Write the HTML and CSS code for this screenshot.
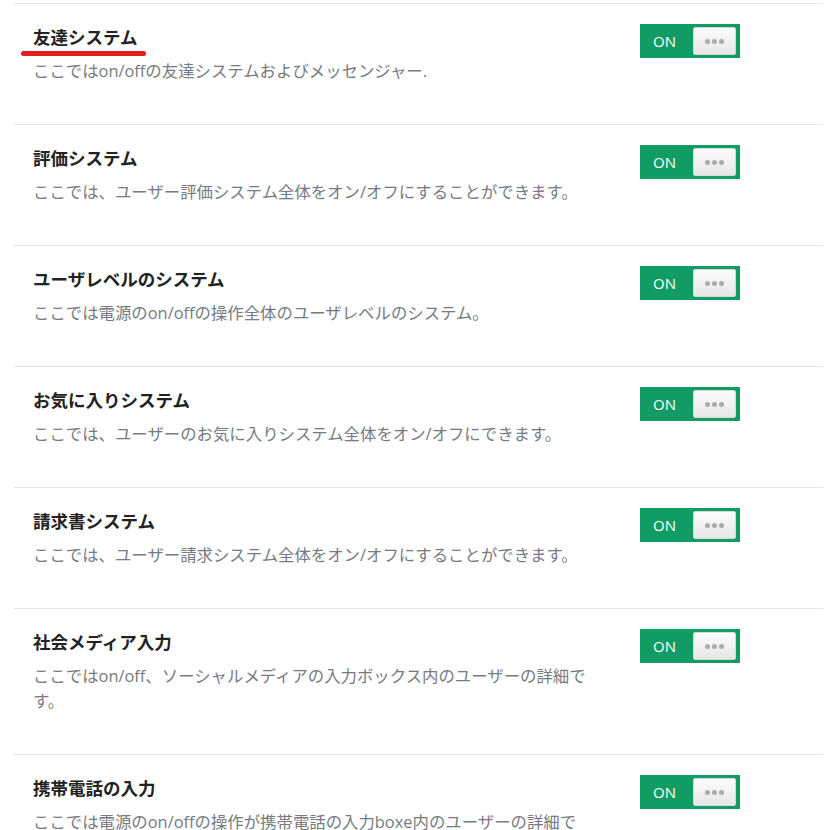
FILE: index.html
```html
<!DOCTYPE html>
<html lang="ja">
<head>
    <meta charset="UTF-8">
    <title>システム設定</title>
    <link rel="stylesheet" href="styles.css">
</head>
<body>
    <div class="settings">
        <div class="setting">
            <div class="info">
                <h3 class="title marked">友達システム</h3>
                <p class="desc">ここではon/offの友達システムおよびメッセンジャー.</p>
            </div>
            <div class="toggle"><span class="on">ON</span><span class="knob"><i></i><i></i><i></i></span></div>
        </div>
        <div class="setting">
            <div class="info">
                <h3 class="title">評価システム</h3>
                <p class="desc">ここでは、ユーザー評価システム全体をオン/オフにすることができます。</p>
            </div>
            <div class="toggle"><span class="on">ON</span><span class="knob"><i></i><i></i><i></i></span></div>
        </div>
        <div class="setting">
            <div class="info">
                <h3 class="title">ユーザレベルのシステム</h3>
                <p class="desc">ここでは電源のon/offの操作全体のユーザレベルのシステム。</p>
            </div>
            <div class="toggle"><span class="on">ON</span><span class="knob"><i></i><i></i><i></i></span></div>
        </div>
        <div class="setting">
            <div class="info">
                <h3 class="title">お気に入りシステム</h3>
                <p class="desc">ここでは、ユーザーのお気に入りシステム全体をオン/オフにできます。</p>
            </div>
            <div class="toggle"><span class="on">ON</span><span class="knob"><i></i><i></i><i></i></span></div>
        </div>
        <div class="setting">
            <div class="info">
                <h3 class="title">請求書システム</h3>
                <p class="desc">ここでは、ユーザー請求システム全体をオン/オフにすることができます。</p>
            </div>
            <div class="toggle"><span class="on">ON</span><span class="knob"><i></i><i></i><i></i></span></div>
        </div>
        <div class="setting">
            <div class="info">
                <h3 class="title">社会メディア入力</h3>
                <p class="desc">ここではon/off、ソーシャルメディアの入力ボックス内のユーザーの詳細です。</p>
            </div>
            <div class="toggle"><span class="on">ON</span><span class="knob"><i></i><i></i><i></i></span></div>
        </div>
        <div class="setting">
            <div class="info">
                <h3 class="title">携帯電話の入力</h3>
                <p class="desc">ここでは電源のon/offの操作が携帯電話の入力boxe内のユーザーの詳細です。</p>
            </div>
            <div class="toggle"><span class="on">ON</span><span class="knob"><i></i><i></i><i></i></span></div>
        </div>
    </div>
</body>
</html>
```

FILE: styles.css
```css
body {
    margin: 0;
    font-family: 'Open Sans', 'Noto Sans CJK JP', sans-serif;
    background-color: #fff;
    overflow: hidden;
}

.settings {
    margin: 3px 15px 0 14px;
}

.setting {
    display: flex;
    align-items: flex-start;
    border-top: 1px solid #e2e2e9;
    padding: 20px 0 41px 19px;
}

.info {
    width: 566px;
}

.title {
    margin: 0;
    padding-top: 1px;
    font-size: 17.5px;
    line-height: 24px;
    font-weight: bold;
    color: #222;
    position: relative;
}

.marked::after {
    content: '';
    position: absolute;
    left: -12px;
    top: 27px;
    width: 125px;
    height: 5px;
    border-radius: 3px;
    background-color: #e11f1f;
}

.desc {
    margin: 9px 0 0;
    font-size: 16.4px;
    line-height: 25px;
    color: #767b82;
}

.toggle {
    display: flex;
    align-items: center;
    width: 100px;
    height: 34px;
    margin-left: 41px;
    background-color: #109c64;
    box-sizing: border-box;
    padding: 0 4px 0 13px;
}

.on {
    color: #fff;
    font-family: 'Open Sans', sans-serif;
    font-size: 15px;
    flex: 1;
}

.knob {
    display: flex;
    align-items: center;
    justify-content: center;
    gap: 2px;
    width: 43px;
    height: 28px;
    box-sizing: border-box;
    border: 1px solid #d8d8d8;
    border-radius: 2px;
    background: linear-gradient(#fdfdfd, #e6e6e6);
}

.knob i {
    width: 5px;
    height: 5px;
    border-radius: 50%;
    background-color: #ababab;
}
```
